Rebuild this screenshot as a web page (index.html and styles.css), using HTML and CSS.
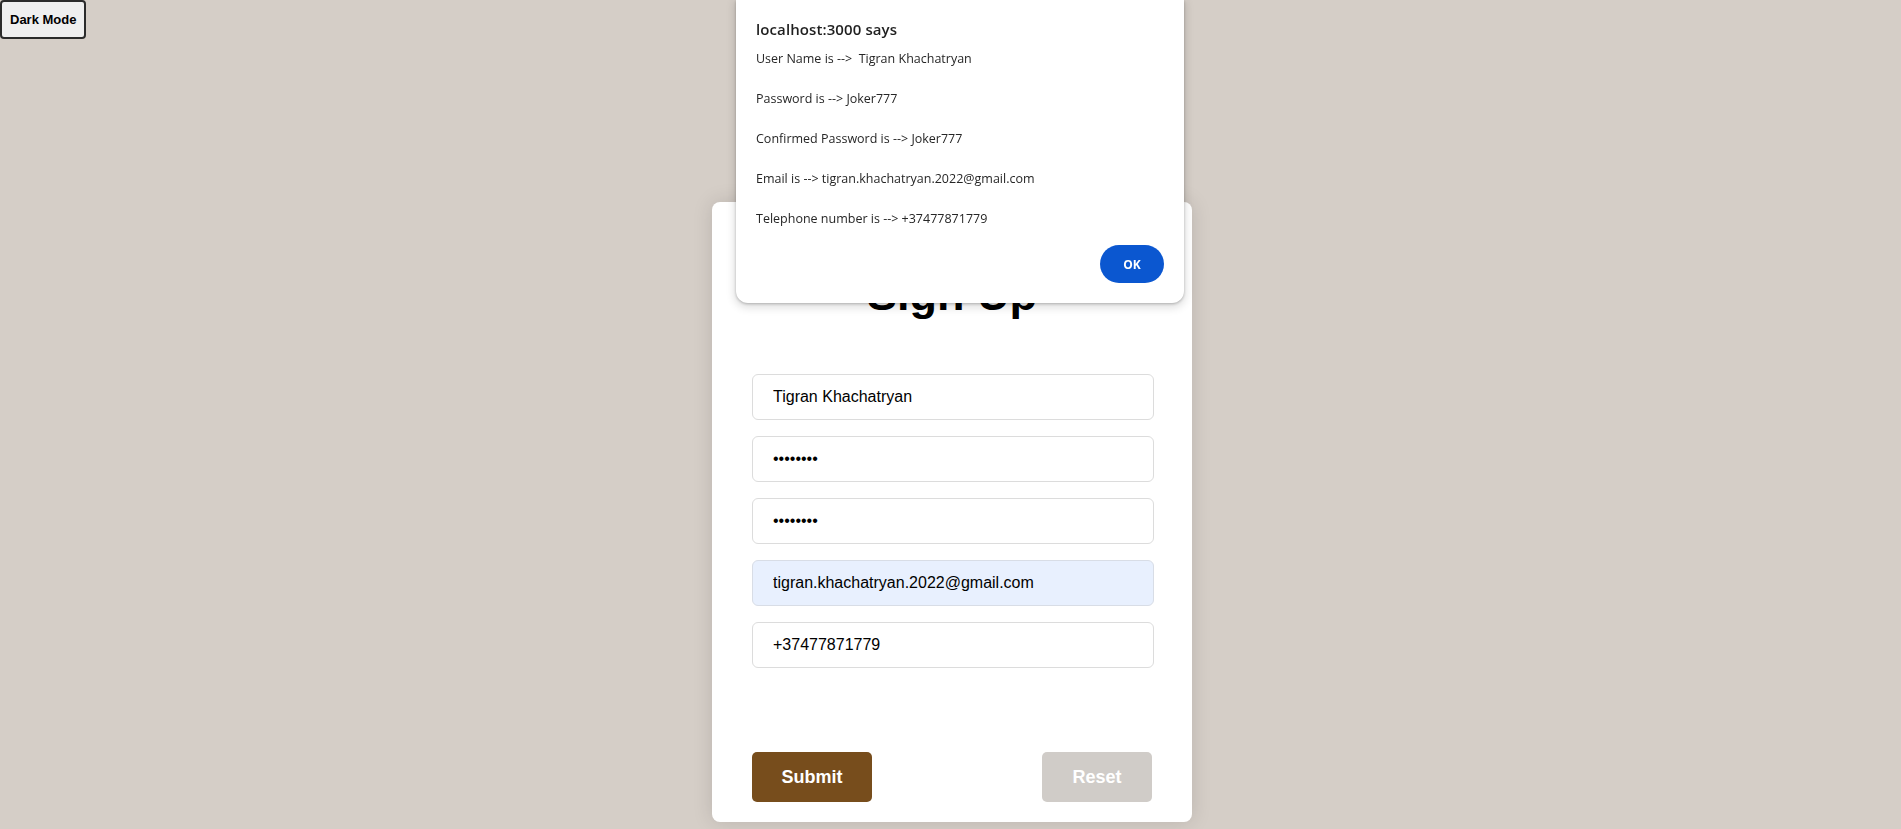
FILE: index.html
```html
<!DOCTYPE html>
<html lang="en">
<head>
<meta charset="utf-8">
<title>Sign Up</title>
<link rel="stylesheet" href="styles.css">
</head>
<body>
<div class="page">
  <div class="topbar">
    <button class="theme-btn" type="button">Dark Mode</button>
  </div>
  <main class="stage">
    <form class="card">
      <h1 class="card-title">Sign Up</h1>
      <div class="fields">
        <input class="field" type="text" value="Tigran Khachatryan">
        <input class="field" type="password" value="Joker777">
        <input class="field" type="password" value="Joker777">
        <input class="field field-autofill" type="email" value="tigran.khachatryan.2022@gmail.com">
        <input class="field" type="tel" value="+37477871779">
      </div>
      <div class="actions">
        <button class="btn btn-submit" type="button">Submit</button>
        <button class="btn btn-reset" type="button">Reset</button>
      </div>
    </form>
  </main>
</div>

<div class="alert" role="alertdialog">
  <div class="alert-title">localhost:3000 says</div>
  <div class="alert-msg">User Name is -->  Tigran Khachatryan

Password is --> Joker777

Confirmed Password is --> Joker777

Email is --> tigran.khachatryan.2022@gmail.com

Telephone number is --> +37477871779</div>
  <div class="alert-actions">
    <button class="alert-ok" type="button">OK</button>
  </div>
</div>
</body>
</html>
```

FILE: styles.css
```css
* { box-sizing: border-box; }

html, body {
  margin: 0;
  padding: 0;
}

body {
  background: #d5cec7;
  font-family: "Liberation Sans", Arial, sans-serif;
  color: #000;
  min-height: 100vh;
  overflow: hidden;
}

.page {
  display: flex;
  flex-direction: column;
}

.topbar {
  display: flex;
  height: 39px;
}

.theme-btn {
  font-family: "Liberation Sans", Arial, sans-serif;
  font-weight: 700;
  font-size: 13px;
  line-height: 15px;
  padding: 10px 8px;
  background: #efefef;
  color: #000;
  border: 2px solid #2b2b2b;
  border-radius: 4px;
  margin: 0;
}

.stage {
  display: flex;
  justify-content: center;
  padding-top: 163px;
  padding-left: 3px;
}

.card {
  width: 480px;
  background: #fff;
  border-radius: 8px;
  box-shadow: 0 0 20px rgba(0, 0, 0, 0.13);
  padding: 67px 40px 20px 40px;
  display: flex;
  flex-direction: column;
}

.card-title {
  margin: 0;
  text-align: center;
  font-size: 45px;
  line-height: 52px;
  font-weight: 700;
  color: #000;
}

.fields {
  display: flex;
  flex-direction: column;
  gap: 16px;
  margin-top: 53px;
}

.field {
  width: calc(100% + 2px);
  height: 46px;
  border: 1px solid #dcdcdc;
  border-radius: 6px;
  padding: 0 20px;
  font-family: "Liberation Sans", Arial, sans-serif;
  font-size: 16px;
  color: #000;
  background: #fff;
  outline: none;
}

.field-autofill {
  background: #e8f0fe;
  border-color: #d8dde6;
}

.actions {
  display: flex;
  justify-content: space-between;
  margin-top: 84px;
}

.btn {
  height: 50px;
  border: none;
  border-radius: 5px;
  color: #fff;
  font-family: "Liberation Sans", Arial, sans-serif;
  font-weight: 700;
  font-size: 18px;
}

.btn-submit {
  width: 120px;
  background: #774d1c;
}

.btn-reset {
  width: 110px;
  background: #d0ccc8;
}

.alert {
  position: fixed;
  top: 0;
  left: 736px;
  width: 448px;
  height: 303px;
  background: #fff;
  border-radius: 0 0 12px 12px;
  box-shadow: 0 1px 3px rgba(0, 0, 0, 0.25), 0 3px 8px 2px rgba(0, 0, 0, 0.12);
  padding: 19px 20px 20px 20px;
  font-family: "Open Sans", "Noto Sans", sans-serif;
  color: #1f1f1f;
}

.alert-title {
  font-size: 15px;
  letter-spacing: 0.1px;
  font-weight: 600;
  line-height: 20px;
}

.alert-msg {
  margin-top: 10px;
  font-size: 12.5px;
  line-height: 20px;
  white-space: pre-wrap;
  color: #262626;
}

.alert-actions {
  display: flex;
  justify-content: flex-end;
  margin-top: 16px;
}

.alert-ok {
  width: 64px;
  height: 38px;
  border: none;
  border-radius: 19px;
  background: #0b57d0;
  color: #fff;
  font-family: "Open Sans", "Noto Sans", sans-serif;
  font-weight: 700;
  font-size: 12px;
}
```
